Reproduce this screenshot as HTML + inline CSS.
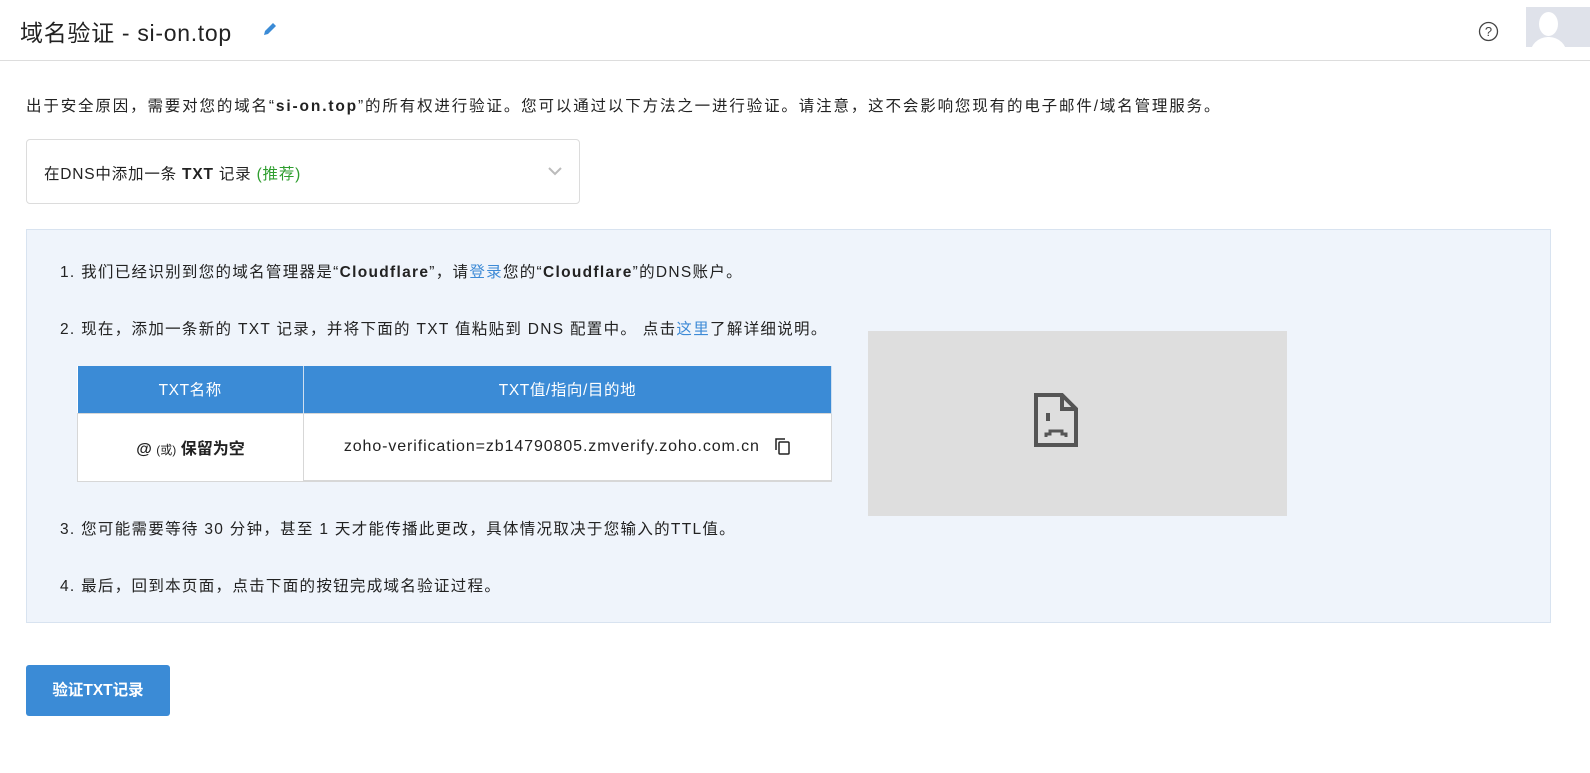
<!DOCTYPE html>
<html><head><meta charset="utf-8"><style>
*{margin:0;padding:0;box-sizing:border-box}
body{width:1590px;height:773px;background:#fff;font-family:"Liberation Sans","Noto Sans CJK SC",sans-serif;color:#222;position:relative;overflow:hidden;font-size:15.5px}
.abs{position:absolute}
.hdr{left:0;top:0;width:1590px;height:61px;border-bottom:1px solid #ddd}
.title{left:20px;top:14px;font-size:23px;color:#222;letter-spacing:0.7px}
.intro{left:26px;top:94px;font-size:15.5px;letter-spacing:1.85px;white-space:nowrap}
.sel{left:26px;top:139px;width:554px;height:65px;border:1px solid #dcdcdc;border-radius:4px}
.sel span{position:absolute;left:17px;top:22px;font-size:15.5px;letter-spacing:0.8px}
.box{left:26px;top:229px;width:1525px;height:394px;background:#eff4fb;border:1px solid #d8e3f0}
.step{position:absolute;left:33px;font-size:15.5px;letter-spacing:1.3px;white-space:nowrap}
a{color:#3d8ad6;text-decoration:none}
table{position:absolute;left:50px;top:136px;width:755px;border-collapse:collapse;background:#fff}
th{background:#3b8bd6;color:#fff;font-weight:normal;height:47px;font-size:15.5px;border-right:1px solid #cfdff0;letter-spacing:0.6px}
td{height:68px;border:1px solid #d7d7d7;text-align:center;font-size:16px}
.img{left:841px;top:101px;width:419px;height:185px;background:#dedede}
.btn{left:26px;top:665px;width:144px;height:51px;background:#3b8bd6;border-radius:3px;color:#fff;font-weight:bold;font-size:15.5px;text-align:center;line-height:51px}
</style></head><body>
<div class="abs hdr"></div>
<div class="abs title">域名验证 - si-on.top</div>
<svg class="abs" style="left:262px;top:21px" width="16" height="16" viewBox="0 0 16 16"><path d="M2 14l1-4 8-8 3 3-8 8z" fill="#3b8bd6"/></svg>
<svg class="abs" style="left:1478px;top:21px" width="21" height="21" viewBox="0 0 21 21"><circle cx="10.5" cy="10.5" r="9" fill="none" stroke="#444" stroke-width="1.3"/><text x="10.5" y="15" font-size="13" text-anchor="middle" font-family="Liberation Sans" fill="#444">?</text></svg>
<div class="abs" style="left:1526px;top:7px;width:64px;height:40px;background:#dfe2ea;overflow:hidden"><div style="position:absolute;left:13px;top:5px;width:19px;height:24px;border-radius:50%;background:#fff"></div><div style="position:absolute;left:4px;top:30px;width:37px;height:20px;border-radius:18px 18px 0 0;background:#fff"></div></div>
<div class="abs intro">出于安全原因，需要对您的域名“<b>si-on.top</b>”的所有权进行验证。您可以通过以下方法之一进行验证。请注意，这不会影响您现有的电子邮件/域名管理服务。</div>
<div class="abs sel"><span>在DNS中添加一条 <b>TXT</b> 记录 <span style="position:static;color:#2e9d2e">(推荐)</span></span>
<svg style="position:absolute;left:521px;top:27px" width="14" height="9" viewBox="0 0 14 9"><path d="M1 1l6 6 6-6" fill="none" stroke="#bbb" stroke-width="2"/></svg></div>
<div class="abs box">
<div class="step" style="top:30px">1. 我们已经识别到您的域名管理器是“<b>Cloudflare</b>”，请<a>登录</a>您的“<b>Cloudflare</b>”的DNS账户。</div>
<div class="step" style="top:87px">2. 现在，添加一条新的 TXT 记录，并将下面的 TXT 值粘贴到 DNS 配置中。 点击<a>这里</a>了解详细说明。</div>
<table><tr><th style="width:226px">TXT名称</th><th>TXT值/指向/目的地</th></tr>
<tr><td><b>@</b> <span style="font-size:12px">(或)</span> <b>保留为空</b></td><td style="border-bottom:2px solid #d7d7d7"><span style="letter-spacing:0.9px">zoho-verification=zb14790805.zmverify.zoho.com.cn</span> &nbsp; <svg width="18" height="18" viewBox="0 0 18 18" style="vertical-align:-4px"><rect x="6" y="5" width="10" height="12" rx="1" fill="none" stroke="#222" stroke-width="1.5"/><path d="M3 13V2h9" fill="none" stroke="#222" stroke-width="1.5"/></svg></td></tr></table>
<div class="step" style="top:287px">3. 您可能需要等待 30 分钟，甚至 1 天才能传播此更改，具体情况取决于您输入的TTL值。</div>
<div class="step" style="top:344px">4. 最后，回到本页面，点击下面的按钮完成域名验证过程。</div>
<div class="abs img"><svg style="position:absolute;left:166px;top:62px" width="44" height="54" viewBox="0 0 44 54"><path d="M2 2h26l14 14v36H2z" fill="none" stroke="#555" stroke-width="4"/><path d="M28 2v14h14" fill="none" stroke="#555" stroke-width="4"/><rect x="12" y="20" width="4" height="8" fill="#555"/><path d="M12 44v-3h4v-3h12v3h4v3" fill="none" stroke="#555" stroke-width="3"/></svg></div>
</div>
<div class="abs btn">验证TXT记录</div>
</body></html>
